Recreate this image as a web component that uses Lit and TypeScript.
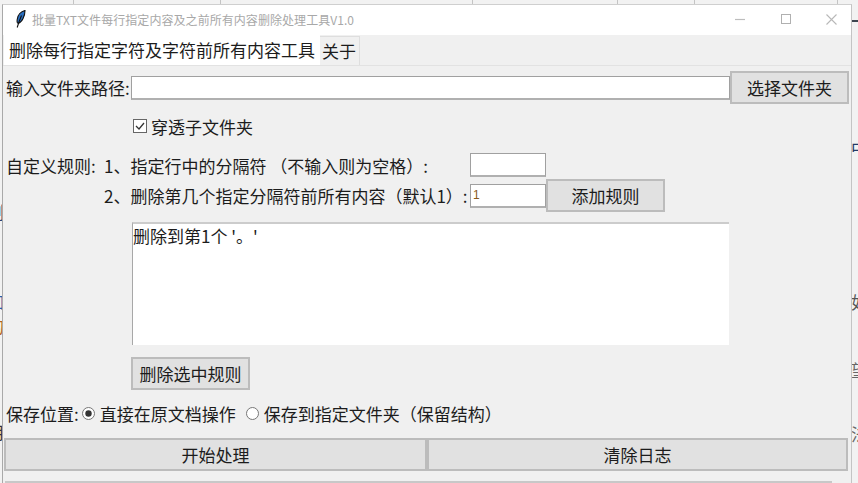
import { LitElement, html, css } from "lit";
import { customElement } from "lit/decorators.js";

@customElement("app-root")
export class AppRoot extends LitElement {
  static styles = css`
    :host {
      display: block;
      position: relative;
      width: 858px;
      height: 483px;
      overflow: hidden;
      background: #f2f2f2;
      font-family: "Noto Sans CJK SC", "Liberation Sans", sans-serif;
      font-size: 17px;
      color: #1c1c1c;
    }
    .frag { position: absolute; font-size: 17px; line-height: 20px; }
    .tick { position: absolute; top: 0; width: 1px; height: 4px; background: #c4c4c4; }
    .rule { position: absolute; left: 851px; top: 20px; width: 7px; height: 2px; background: #3c4650; }
    .window {
      position: absolute;
      left: 2px;
      top: 4px;
      width: 850px;
      height: 479px;
      box-sizing: border-box;
      border-left: 1px solid #a9a9a9;
      border-right: 1px solid #c4c4c4;
      border-top: 1px solid #cfcfcf;
      background: #f0f0f0;
      display: flex;
      flex-direction: column;
    }
    .title {
      height: 30px;
      flex: none;
      background: #fff;
      display: flex;
      align-items: center;
      padding-left: 12px;
      padding-bottom: 2px;
      box-sizing: border-box;
      font-size: 12px;
      color: #a8a8a8;
    }
    .title svg.logo { width: 12px; height: 18px; margin-right: 5px; flex: none; }
    .title .t { flex: 1; white-space: nowrap; letter-spacing: 0.06px; }
    .ctl { display: flex; flex: none; margin-right: 14px; align-items: center; gap: 34.5px; }
    .ctl svg { width: 11px; height: 11px; display: block; }
    .tabs { height: 30px; flex: none; display: flex; padding-left: 1px; }
    .tab {
      box-sizing: border-box;
      height: 30px;
      display: flex;
      align-items: center;
      white-space: nowrap;
      padding-bottom: 2px;
    }
    .tab.on { width: 316px; background: #fff; padding-left: 5px; }
    .tab.off {
      width: 40px;
      height: 29px;
      margin-top: 1px;
      padding-left: 2px;
      border: 1px solid #dedede;
      border-bottom: 0;
      border-left: 0;
    }
    .panel {
      flex: 1;
      border-top: 1px solid #e2e2e2;
      padding: 5px 0 0 3px;
      display: flex;
      flex-direction: column;
      align-items: flex-start;
      white-space: nowrap;
    }
    .btn {
      box-sizing: border-box;
      width: 119px;
      height: 33px;
      display: flex;
      align-items: center;
      justify-content: center;
      background: #e1e1e1;
      border: 2px solid #bcbcbc;
      flex: none;
    }
    .entry {
      box-sizing: border-box;
      background: #fff;
      border: 1px solid #a0a0a0;
      border-bottom: 2px solid #b0b0b0;
      flex: none;
    }
    .row1 { display: flex; align-items: center; height: 33px; }
    .row1 .lbl { width: 125px; }
    .row1 .entry { width: 599px; height: 24px; }
    .check {
      display: flex;
      align-items: center;
      height: 30px;
      margin: 7px 0 0 127px;
      gap: 4px;
    }
    .check svg { width: 14px; height: 14px; flex: none; }
    .rules {
      display: grid;
      grid-template-columns: 98px 366px 76px 119px;
      grid-template-rows: 24px 33px;
      align-items: center;
      margin-top: 12px;
      height: 60px;
      row-gap: 2px;
    }
    .rules .entry { width: 76px; height: 24px; }
    .one {
      font-size: 12px;
      color: #8a5a1a;
      padding-left: 2px;
      line-height: 20px;
      font-family: "Liberation Sans", sans-serif;
    }
    .list {
      box-sizing: border-box;
      width: 597px;
      height: 123px;
      margin: 9px 0 0 126px;
      background: #fff;
      border-top: 2px solid #cccccc;
      border-left: 1px solid #a8a8a8;
      line-height: 24px;
      font-size: 17px;
    }
    .del { margin: 12px 0 0 125px; }
    .save { display: flex; align-items: center; height: 28px; margin-top: 9px; }
    .save svg { width: 13px; height: 13px; flex: none; }
    .save .r1 { margin: 0 5px 0 3px; }
    .save .r2 { margin: 0 5px 0 10px; }
    .bottom {
      display: grid;
      grid-template-columns: 423px 421px;
      margin: 11px 0 0 -2px;
    }
    .bottom .btn { width: 100%; height: 33px; }
    .log {
      width: 827px;
      height: 8px;
      margin: 10px 0 0 -1px;
      box-sizing: border-box;
      border-top: 2px solid #c8c8c8;
      background: #fff;
    }
  `;

  render() {
    return html`
      ${[73, 220, 472, 617, 694, 837].map(
        (x) => html`<div class="tick" style="left:${x}px"></div>`
      )}
      <div class="rule"></div>
      <span class="frag" style="left:-13px;top:202px;color:#223a66">删</span>
      <span class="frag" style="left:-13px;top:292px;color:#2a5fa8">如</span>
      <span class="frag" style="left:-13px;top:316px;color:#b5651d">的</span>
      <span class="frag" style="left:-13px;top:422px;color:#333">用</span>
      <span class="frag" style="left:851px;top:138px;color:#223a66">中</span>
      <span class="frag" style="left:851px;top:292px;color:#555">如</span>
      <span class="frag" style="left:851px;top:360px;color:#666">望</span>
      <span class="frag" style="left:851px;top:424px;color:#666">法</span>

      <div class="window">
        <div class="title">
          <svg class="logo" viewBox="0 0 12 18">
            <path d="M10 .5C6 1.5 2.6 5 2.2 9.5c-.3 2.5 0 4 1.2 3.8C7 12.3 10 6 10 .5z" fill="#2a6fc0" stroke="#111" stroke-width="1.1"/>
            <path d="M6.5 5.5C5 9 3.5 13 2.2 17.5" stroke="#111" stroke-width="1.1" fill="none"/>
          </svg>
          <span class="t">批量TXT文件每行指定内容及之前所有内容删除处理工具V1.0</span>
          <div class="ctl">
            <svg viewBox="0 0 11 11"><path d="M0 5.5h10" stroke="#bdbdbd" stroke-width="1.2"/></svg>
            <svg viewBox="0 0 11 11"><rect x=".5" y=".5" width="9" height="9" fill="none" stroke="#b0b0b0"/></svg>
            <svg viewBox="0 0 11 11"><path d="M.5.5l10 10M10.5.5l-10 10" stroke="#b8b8b8" stroke-width="1.1"/></svg>
          </div>
        </div>
        <div class="tabs">
          <div class="tab on">删除每行指定字符及字符前所有内容工具</div>
          <div class="tab off">关于</div>
        </div>
        <div class="panel">
          <div class="row1">
            <span class="lbl">输入文件夹路径:</span>
            <div class="entry"></div>
            <div class="btn">选择文件夹</div>
          </div>
          <div class="check">
            <svg viewBox="0 0 14 14">
              <rect x=".5" y=".5" width="13" height="13" fill="#fff" stroke="#666"/>
              <path d="M3 7l3 3 5-6" fill="none" stroke="#333" stroke-width="1.3"/>
            </svg>
            <span>穿透子文件夹</span>
          </div>
          <div class="rules">
            <span>自定义规则:</span>
            <span>1、指定行中的分隔符 （不输入则为空格）:</span>
            <div class="entry"></div>
            <span></span>
            <span></span>
            <span>2、删除第几个指定分隔符前所有内容（默认1）:</span>
            <div class="entry one">1</div>
            <div class="btn">添加规则</div>
          </div>
          <div class="list">删除到第1个 '。'</div>
          <div class="btn del">删除选中规则</div>
          <div class="save">
            <span>保存位置:</span>
            <svg class="r1" viewBox="0 0 13 13">
              <circle cx="6.5" cy="6.5" r="6" fill="#fff" stroke="#777"/>
              <circle cx="6.5" cy="6.5" r="3.2" fill="#333"/>
            </svg>
            <span>直接在原文档操作</span>
            <svg class="r2" viewBox="0 0 13 13">
              <circle cx="6.5" cy="6.5" r="6" fill="#fff" stroke="#777"/>
            </svg>
            <span>保存到指定文件夹（保留结构）</span>
          </div>
          <div class="bottom">
            <div class="btn">开始处理</div>
            <div class="btn">清除日志</div>
          </div>
          <div class="log"></div>
        </div>
      </div>
    `;
  }
}
